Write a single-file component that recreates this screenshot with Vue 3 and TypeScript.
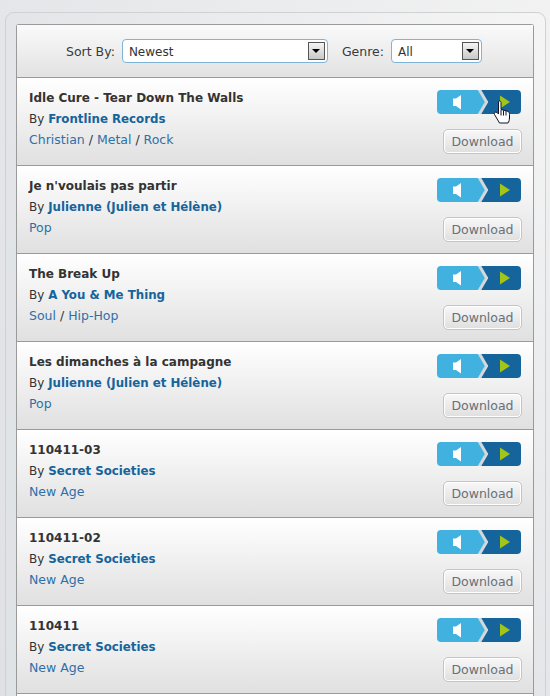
<script setup lang="ts">
interface Track {
  title: string;
  artist: string;
  genres: string[];
}

const tracks: Track[] = [
  { title: 'Idle Cure - Tear Down The Walls', artist: 'Frontline Records', genres: ['Christian', 'Metal', 'Rock'] },
  { title: "Je n'voulais pas partir", artist: 'Julienne (Julien et Hélène)', genres: ['Pop'] },
  { title: 'The Break Up', artist: 'A You & Me Thing', genres: ['Soul', 'Hip-Hop'] },
  { title: 'Les dimanches à la campagne', artist: 'Julienne (Julien et Hélène)', genres: ['Pop'] },
  { title: '110411-03', artist: 'Secret Societies', genres: ['New Age'] },
  { title: '110411-02', artist: 'Secret Societies', genres: ['New Age'] },
  { title: '110411', artist: 'Secret Societies', genres: ['New Age'] },
];
</script>

<template>
  <div class="page">
    <div class="outer">
      <div class="panel">
        <div class="filters">
          <label class="filter-label">Sort By:</label>
          <div class="select select-sort">
            <span class="value">Newest</span>
            <span class="arrow"><i></i></span>
          </div>
          <label class="filter-label genre-label">Genre:</label>
          <div class="select select-genre">
            <span class="value">All</span>
            <span class="arrow"><i></i></span>
          </div>
        </div>

        <div v-for="(track, i) in tracks" :key="i" class="row">
          <div class="info">
            <div class="title">{{ track.title }}</div>
            <div class="by">By <a class="artist">{{ track.artist }}</a></div>
            <div class="genres">
              <template v-for="(g, j) in track.genres" :key="g">
                <span v-if="j > 0" class="sep"> / </span><a class="genre">{{ g }}</a>
              </template>
            </div>
          </div>
          <div class="actions">
            <div class="player">
              <svg width="84" height="24" viewBox="0 0 84 24">
                <path d="M4 0H41L49 12L41 24H4A4 4 0 0 1 0 20V4A4 4 0 0 1 4 0Z" fill="#41b2e0" />
                <path d="M43 0H80A4 4 0 0 1 84 4V20A4 4 0 0 1 80 24H43L51 12Z" fill="#15649c" />
                <path d="M42 -1L49.500 12L42 25" fill="none" stroke="#d4d8da" stroke-width="3" />
                <path d="M16 8.500H19L24 5V19.500L19 16H16Z" fill="#fff" />
                <path d="M63 5.500L73 12L63 18.500Z" fill="#a2c518" />
              </svg>
              <svg v-if="i === 0" class="cursor" width="18" height="24" viewBox="0 0 18 24">
                <path
                  d="M5.500 1.500C6.500 .5 8 1 8 2.500V9.500L14 11C16 11.500 16.500 12.500 16.500 14.500V18C16.500 20 16 21.500 15 23H6.500L1.500 14.500C.5 12.500 2.500 11.500 4 12.500L5.500 14Z"
                  fill="#fff"
                  stroke="#10132e"
                  stroke-width="1"
                />
                <path d="M8 10V15.500M10.500 10.500V15.500M13 11V15.500" stroke="#10132e" stroke-width="1" fill="none" />
              </svg>
            </div>
            <button class="download">Download</button>
          </div>
        </div>
      </div>
    </div>
  </div>
</template>

<style>
html,
body {
  margin: 0;
  height: 100%;
  overflow: hidden;
}
</style>

<style scoped>
.page {
  width: 550px;
  height: 696px;
  overflow: hidden;
  box-sizing: border-box;
  padding: 12px 4px 0 5px;
  background: linear-gradient(to top right, #dfe1e5, #e4e6e9 50%, #f2f2f2);
  font-family: "DejaVu Sans", Verdana, sans-serif;
}

.outer {
  box-sizing: border-box;
  height: 720px;
  padding: 11px 11px 0 10px;
  background: linear-gradient(to top right, #dfe2e5, #e3e5e8 50%, #f5f5f5);
  border: 1px solid #cfd1d3;
  border-radius: 9px 9px 0 0;
}

.panel {
  height: 100%;
  background: #fff;
  border: 1px solid #9a9a9a;
  border-bottom: 0;
  border-radius: 3px 3px 0 0;
}

.filters {
  box-sizing: border-box;
  height: 53px;
  display: flex;
  align-items: center;
  padding-left: 49px;
  background: linear-gradient(#fafafa, #e2e2e2);
  border-bottom: 1px solid #9a9a9a;
  font-size: 12.500px;
  color: #3a3a3a;
}

.filter-label {
  margin-right: 7px;
}

.genre-label {
  margin-left: 14px;
}

.select {
  box-sizing: border-box;
  height: 24px;
  display: flex;
  align-items: center;
  justify-content: space-between;
  padding: 0 2px 0 6px;
  background: #fff;
  border: 1px solid #7fb4d6;
  border-radius: 4px;
  font-size: 12px;
  color: #333;
}

.value {
  padding-top: 1px;
}

.select-sort {
  width: 206px;
}

.select-genre {
  width: 91px;
}

.arrow {
  box-sizing: border-box;
  width: 17px;
  height: 18px;
  display: flex;
  align-items: center;
  justify-content: center;
  background: linear-gradient(#f4f4f4, #c8c8c8);
  border: 1px solid #555;
}

.arrow i {
  width: 0;
  height: 0;
  border-left: 4px solid transparent;
  border-right: 4px solid transparent;
  border-top: 4px solid #000;
}

.row {
  box-sizing: border-box;
  height: 88px;
  display: flex;
  justify-content: space-between;
  padding: 10px 11px 0 12px;
  background: linear-gradient(#fff, #e0e0e0);
  border-bottom: 1px solid #9a9a9a;
}

.info {
  line-height: 21px;
}

.title {
  font-size: 12px;
  font-weight: 700;
  color: #333;
}

.by {
  font-size: 12px;
  color: #333;
}

.artist {
  font-size: 11.800px;
  font-weight: 700;
  color: #15649c;
}

.genres {
  margin-top: -1px;
  font-size: 12.500px;
  color: #333;
}

.genre {
  color: #2f6fa8;
}

.actions {
  display: flex;
  flex-direction: column;
  align-items: flex-end;
}

.player {
  position: relative;
  height: 24px;
  margin: 2px 1px 0 0;
}

.player svg {
  display: block;
}

.cursor {
  position: absolute;
  left: 56px;
  top: 10px;
}

.download {
  box-sizing: border-box;
  width: 79px;
  height: 25px;
  margin-top: 15px;
  padding: 0;
  font-family: inherit;
  font-size: 12.500px;
  color: #67707a;
  background: linear-gradient(#f8f8f8, #dfdfdf);
  border: 1px solid #c4c4c4;
  border-radius: 5px;
  box-shadow: inset 0 0 0 1px #fff;
}
</style>
